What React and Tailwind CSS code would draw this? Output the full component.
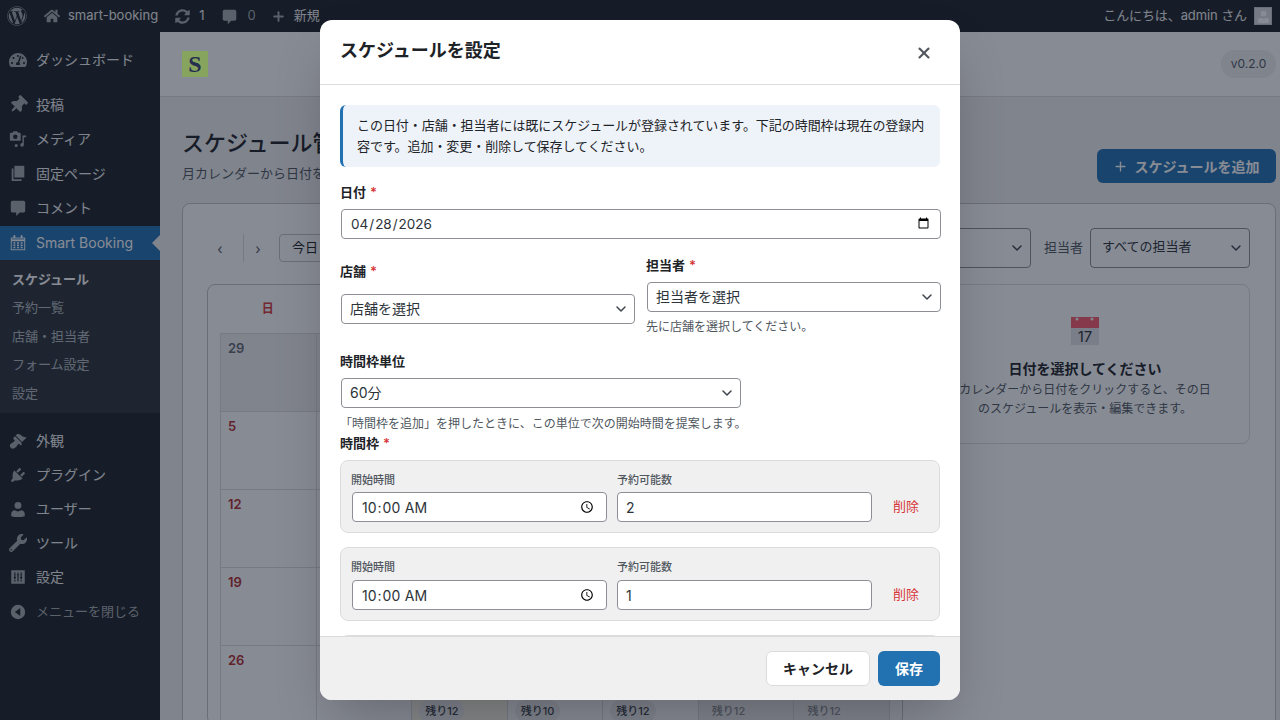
import React from "react";
import { FaWordpress, FaHome, FaSyncAlt, FaTachometerAlt, FaThumbtack, FaWrench } from "react-icons/fa";
import { ChevronDown, Plus, X } from "lucide-react";

const Bubble = ({ className }) => (
  <svg viewBox="0 0 20 20" className={className} fill="currentColor"><path d="M4 2h12c1.100 0 2 .9 2 2v9c0 1.100-.9 2-2 2h-4l-4 4v-4H4c-1.100 0-2-.9-2-2V4c0-1.100.9-2 2-2z" /></svg>
);
const MediaIcon = ({ className }) => (
  <svg viewBox="0 0 20 20" className={className} fill="currentColor"><path d="M2 3h2l1-1.500h4L10 3h2c.6 0 1 .4 1 1v7c0 .6-.4 1-1 1H2c-.6 0-1-.4-1-1V4c0-.6.4-1 1-1zm5 2a2.500 2.500 0 100 5 2.500 2.500 0 000-5z" /><path d="M15 6h4v2h-2.500v8.500a2 2 0 11-1.500-1.900V6zM8 15.500a1.700 1.700 0 100 3.400 1.700 1.700 0 000-3.400z" /></svg>
);
const PagesIcon = ({ className }) => (
  <svg viewBox="0 0 20 20" className={className} fill="currentColor"><path d="M6 2h11v13H6z" /><path d="M3 5h2v12h9v2H3z" /></svg>
);
const CalendarIcon = ({ className }) => (
  <svg viewBox="0 0 20 20" className={className} fill="none" stroke="currentColor" strokeWidth="1"><rect x="2.500" y="4.500" width="15" height="13" /><path d="M2.500 7h15" strokeWidth="2" /><path d="M6 1.500v3M14 1.500v3" strokeWidth="2" /><path d="M5 10h2M9 10h2M13 10h2M5 12.500h2M9 12.500h2M13 12.500h2M5 15h2M9 15h2M13 15h2" strokeWidth="1.500" /></svg>
);
const UserIcon = ({ className }) => (
  <svg viewBox="0 0 20 20" className={className} fill="currentColor"><circle cx="10" cy="6" r="3.800" /><path d="M2.500 18v-2.500c0-2.500 2-4 4-4 1 .8 2.200 1.300 3.500 1.300s2.500-.5 3.500-1.300c2 0 4 1.500 4 4V18c-2 .6-4.500 1-7.500 1s-5.500-.4-7.500-1z" /></svg>
);
const SettingsIcon = ({ className }) => (
  <svg viewBox="0 0 20 20" className={className}><path fill="currentColor" d="M2.500 2.500h15v15h-15z" /><path stroke="#1d2327" strokeWidth="1.300" fill="none" d="M6.500 5v5M10 8v7M13.500 5v5M6.500 13v2M10 5v.8M13.500 13v2" /><path fill="#1d2327" d="M5 10h3l-1.500 3zM8.500 8h3L10 5.500zM12 10h3l-1.500 3z" /></svg>
);
const CollapseIcon = ({ className }) => (
  <svg viewBox="0 0 20 20" className={className}><circle cx="10" cy="10" r="8" fill="currentColor" /><path d="M12.500 5.500v9L6.500 10z" fill="#1d2327" /></svg>
);
const BrushIcon = ({ className }) => (
  <svg viewBox="0 0 20 20" className={className} fill="currentColor"><path d="M14.480 11.060L7.410 3.990l1.500-1.500c.5-.56 2.300-.47 3.510.32 1.210.8 1.430 1.280 2.910 2.100 1.180.64 2.450 1.260 4.450.85z" /><path d="M13.770 11.770L6.700 4.700 4.930 6.470c-.39.39-.39 1.020 0 1.410l1.060 1.060c.39.39.39 1.030 0 1.420-.6.6-1.430 1.110-2.210 1.690-.35.26-.7.53-1.010.84C1.430 13.060 1 14.200 1 15.500c0 .83.33 1.500 1 2 .5.670 1.170 1 2 1 1.500 0 2.640-.43 3.650-1.770.31-.31.58-.66.84-1.010.58-.78 1.090-1.610 1.690-2.210.39-.39 1.030-.39 1.420 0l1.060 1.060c.39.39 1.020.39 1.410 0z" /></svg>
);
const PlugIcon = ({ className }) => (
  <svg viewBox="0 0 20 20" className={className} fill="currentColor"><path d="M13.110 4.360L9.870 7.600 8 5.730l3.240-3.240c.35-.34 1.050-.2 1.560.32.52.51.66 1.210.31 1.550zm-8 1.770l.91-1.120 9.010 9.010-1.190.84c-.71.71-2.630 1.160-3.820 1.160H6.140L4.900 17.260c-.59.59-1.540.59-2.120 0-.59-.58-.59-1.530 0-2.120l1.240-1.240v-3.880c0-1.130.46-3.050 1.090-3.890zm7.260 3.970l3.240-3.240c.34-.35 1.040-.21 1.550.31.52.51.66 1.210.31 1.550l-3.240 3.250z" /></svg>
);

const iconCls = "w-[18px] h-[18px]";
const menuA = [
  [<FaThumbtack className={`${iconCls} rotate-45`} />, "投稿"],
  [<MediaIcon className={iconCls} />, "メディア"],
  [<PagesIcon className={iconCls} />, "固定ページ"],
  [<Bubble className={iconCls} />, "コメント"],
];
const menuB = [
  [<BrushIcon className={iconCls} />, "外観"],
  [<PlugIcon className={iconCls} />, "プラグイン"],
  [<UserIcon className={iconCls} />, "ユーザー"],
  [<FaWrench className={iconCls} />, "ツール"],
  [<SettingsIcon className={iconCls} />, "設定"],
];

const MenuItem = ({ icon, label, h = "h-[34.300px]" }) => (
  <div className={`${h} flex items-center text-[14px] text-[#f0f0f1]`}>
    <span className="w-[36px] pl-[9px] flex text-[#a7aaad]">{icon}</span>
    <span>{label}</span>
  </div>
);

const Select = ({ value, className = "", small }) => (
  <div className={`relative ${className}`}>
    <select defaultValue={value} className={`w-full appearance-none bg-white border border-[#8c8f94] rounded-[4px] pr-6 pb-[2px] text-[#2c3338] outline-none ${small ? "h-[40px] pl-[11px] text-[13px]" : "h-[30px] pl-[8px] text-[14px]"}`}>
      <option>{value}</option>
    </select>
    <ChevronDown strokeWidth={2.2} className="w-[16px] h-[16px] absolute right-[6px] top-1/2 -translate-y-1/2 text-[#3c434a] pointer-events-none" />
  </div>
);

const Required = () => <span className="text-[#d63638] ml-[4px]">*</span>;
const Label = ({ children, req, className = "" }) => (
  <div className={`text-[13px] font-semibold text-[#1d2327] leading-[17px] ${className}`}>{children}{req && <Required />}</div>
);
const Help = ({ children, className = "" }) => <div className={`text-[12px] text-[#50575e] leading-[16px] ${className}`}>{children}</div>;

const inputBase = "bg-white border border-[#8c8f94] rounded-[4px] h-[30px] text-[#2c3338] outline-none";

const Slot = ({ count, className, gap }) => (
  <div className={`bg-[#f0f0f1] border border-[#dcdcde] rounded-[8px] pl-[11px] pr-[11px] pt-[12px] pb-[10px] flex items-end gap-[10px] ${className}`}>
    <div>
      <div className={`text-[11px] text-[#50575e] font-medium leading-[15px] -ml-px ${gap}`}>開始時間</div>
      <input type="time" defaultValue="10:00" className={`${inputBase} w-[255px] px-[8px] text-[14px]`} />
    </div>
    <div>
      <div className={`text-[11px] text-[#50575e] font-medium leading-[15px] ${gap}`}>予約可能数</div>
      <input type="number" defaultValue={count} className={`${inputBase} w-[255px] px-[8px] text-[14px]`} />
    </div>
    <div className="ml-[11px] text-[13px] text-[#d63638] h-[30px] leading-[28px]">削除</div>
  </div>
);

const rows = [
  [29, 30, 31, 1, 2, 3, 4],
  [5, 6, 7, 8, 9, 10, 11],
  [12, 13, 14, 15, 16, 17, 18],
  [19, 20, 21, 22, 23, 24, 25],
  [26, 27, 28, 29, 30, 1, 2],
];
const chips = { 2: "残り12", 3: "残り10", 4: "残り12", 5: "残り12", 6: "残り12" };

const Calendar = () => (
  <div className="w-[696px] shrink-0 border border-[#c3c4c7] rounded-[8px] px-[12px] bg-white">
    <div className="grid grid-cols-7 h-[48px] items-center text-center text-[12px] font-semibold text-[#50575e]">
      {["日", "月", "火", "水", "木", "金", "土"].map((d, i) => (
        <div key={d} className={i === 0 ? "text-[#d63638]" : ""}>{d}</div>
      ))}
    </div>
    <div className="grid grid-cols-7 border-t border-l border-[#dcdcde]">
      {rows.flatMap((r, ri) =>
        r.map((d, ci) => {
          const other = (ri === 0 && ci < 3) || (ri === 4 && ci >= 5);
          const today = ri === 4 && ci === 2;
          const chip = ri === 4 && chips[ci];
          return (
            <div key={`${ri}-${ci}`} className={`h-[78px] border-r border-b border-[#dcdcde] pl-[7px] pt-[4px] ${other ? "bg-[#f0f0f1]" : today ? "bg-[#fcf9e8]" : "bg-white"}`}>
              <div className={`text-[13px] font-semibold leading-[20px] ${ci === 0 ? (other ? "text-[#646970]" : "text-[#b32d2e]") : "text-[#50575e]"}`}>{d}</div>
              {chip && (
                <div className={`mt-[30px] w-fit text-[11px] font-medium leading-[22px] rounded-full px-[6px] ${other ? "text-[#8c8f94]" : "bg-[#f0f0f1] text-[#3c434a]"}`}>{chip}</div>
              )}
            </div>
          );
        })
      )}
    </div>
  </div>
);

export default function App() {
  return (
    <div className="h-[720px] w-[1280px] overflow-hidden relative flex flex-col bg-[#f0f0f1] text-[#1d2327] font-['Inter','Noto_Sans_CJK_JP',sans-serif]">
      {/* admin bar */}
      <div className="h-[32px] shrink-0 bg-[#1d2327] flex items-center text-[13px] text-[#f0f0f1]">
        <FaWordpress className="w-[20px] h-[20px] ml-[7px] text-[#a7aaad]" />
        <FaHome className="w-[16px] h-[16px] ml-[17px] text-[#a7aaad]" />
        <span className="ml-[8px]">smart-booking</span>
        <FaSyncAlt className="w-[15px] h-[15px] ml-[17px] text-[#a7aaad]" />
        <span className="ml-[9px]">1</span>
        <Bubble className="w-[17px] h-[17px] ml-[17px] text-[#a7aaad]" />
        <span className="ml-[9px] text-[#a7aaad]">0</span>
        <Plus strokeWidth={3} className="w-[15px] h-[15px] ml-[15px] text-[#a7aaad]" />
        <span className="ml-[8px]">新規</span>
        <span className="ml-auto tracking-[-0.1px]">こんにちは、admin さん</span>
        <span className="ml-[7px] mr-[8px] w-[18px] h-[18px] bg-[#dcdcde] border border-[#c3c4c7] overflow-hidden flex items-end justify-center">
          <UserIcon className="w-[15px] h-[15px] text-white" />
        </span>
      </div>

      <div className="flex flex-1 min-h-0">
        {/* sidebar */}
        <aside className="w-[160px] shrink-0 bg-[#1d2327]">
          <div className="pt-[10.500px]">
            <MenuItem icon={<FaTachometerAlt className={iconCls} />} label="ダッシュボード" />
          </div>
          <div className="mt-[10.700px]">
            {menuA.map(([icon, label]) => <MenuItem key={label} icon={icon} label={label} />)}
          </div>
          <div className="h-[34px] mt-[1.300px] bg-[#2271b1] flex items-center text-[14px] text-white relative">
            <span className="w-[36px] pl-[9px] flex"><CalendarIcon className={iconCls} /></span>
            <span>Smart Booking</span>
            <span className="absolute right-0 top-[9px] border-y-[8px] border-y-transparent border-r-[8px] border-r-[#f0f0f1]" />
          </div>
          <div className="h-[153px] bg-[#2c3338] pt-[5px] pl-[12px] text-[13px] text-[#f0f6fcb3]">
            <div className="h-[29px] flex items-center font-bold text-white">スケジュール</div>
            {["予約一覧", "店舗・担当者", "フォーム設定", "設定"].map((t) => (
              <div key={t} className="h-[28.500px] flex items-center">{t}</div>
            ))}
          </div>
          <div className="mt-[11px]">
            {menuB.map(([icon, label]) => <MenuItem key={label} icon={icon} label={label} h="h-[34px]" />)}
          </div>
          <div className="h-[34px] mt-px flex items-center text-[13px] text-[#a7aaad]">
            <span className="w-[36px] pl-[9px] flex"><CollapseIcon className={iconCls} /></span>
            <span>メニューを閉じる</span>
          </div>
        </aside>

        {/* main */}
        <main className="flex-1 min-w-0 overflow-hidden">
          <header className="h-[65px] bg-white border-b border-[#dcdcde] flex items-center pl-[22px] pr-[4px] justify-between">
            <div className="relative z-[1] w-[26px] h-[26px] bg-[#86a45e] flex items-center justify-center font-['Liberation_Serif',serif] font-bold text-[24px] text-[#262e50] leading-none">S</div>
            <div className="h-[28px] w-[55px] rounded-full bg-[#f0f0f1] text-[12px] text-[#50575e] flex items-center justify-center">v0.2.0</div>
          </header>
          <div className="pl-[22px] pr-[4px]">
            <div className="flex items-start justify-between pt-[30px] h-[106px]">
              <div>
                <h1 className="text-[22px] font-medium leading-[32px] text-[#1d2327]">スケジュール管理</h1>
                <p className="text-[13px] leading-[20px] text-[#50575e] mt-[4px]">月カレンダーから日付を選択してスケジュールを管理します。</p>
              </div>
              <div className="mt-[22px] h-[34px] w-[179px] rounded-[6px] bg-[#2271b1] text-white text-[14px] font-semibold flex items-center justify-center gap-[6px]">
                <Plus strokeWidth={2.2} className="w-[15px] h-[15px]" />スケジュールを追加
              </div>
            </div>
            <div className="border border-[#c3c4c7] rounded-[8px] bg-white pl-[24px] pr-[25px] h-[600px]">
              <div className="h-[80px] flex items-center pt-[8px]">
                <span className="w-[26px] text-[14px] text-[#50575e] text-center">‹</span>
                <span className="w-px h-[28px] bg-[#dcdcde] ml-[10px]" />
                <span className="w-[26px] ml-px text-[14px] text-[#50575e] text-center">›</span>
                <span className="ml-[8px] h-[28px] w-[52px] border border-[#c3c4c7] rounded-[4px] flex items-center justify-center text-[13px]">今日</span>
                <span className="ml-auto text-[13px] text-[#50575e] mr-[7px]">店舗</span>
                <Select small value="すべての店舗" className="w-[160px]" />
                <span className="ml-[13px] text-[13px] text-[#50575e] mr-[7px]">担当者</span>
                <Select small value="すべての担当者" className="w-[160px]" />
              </div>
              <div className="flex gap-[17px] items-start">
                <Calendar />
                <div className="w-[330px] h-[160px] border border-[#dcdcde] rounded-[8px] flex flex-col items-center pt-[32px] text-center">
                  <svg viewBox="0 0 28 28" className="w-[28px] h-[28px]">
                    <rect width="28" height="28" fill="#e4e4e8" />
                    <rect width="28" height="11" fill="#ff5a6e" />
                    <circle cx="6" cy="2" r="1.500" fill="#f0f0f1" />
                    <circle cx="21" cy="2" r="1.500" fill="#f0f0f1" />
                    <text x="14" y="25" textAnchor="middle" fontSize="15" fill="#2c3338" fontFamily="Inter, sans-serif">17</text>
                  </svg>
                  <div className="text-[14px] font-semibold text-[#1d2327] mt-[14px] leading-[19px]">日付を選択してください</div>
                  <div className="text-[12px] text-[#50575e] leading-[19px] mt-[2px]">カレンダーから日付をクリックすると、その日<br />のスケジュールを表示・編集できます。</div>
                </div>
              </div>
            </div>
          </div>
        </main>
      </div>

      {/* overlay */}
      <div className="absolute inset-0 bg-[rgba(15,23,42,0.5)] flex items-center justify-center">
        <div className="w-[640px] h-[680px] bg-white rounded-[12px] overflow-hidden flex flex-col shadow-2xl">
          <div className="h-[65px] shrink-0 border-b border-[#dcdcde] flex items-center justify-between pl-[20px] pr-[27px]">
            <h2 className="text-[18px] font-bold text-[#1d2327] -mt-[2.500px]">スケジュールを設定</h2>
            <X strokeWidth={2.8} className="w-[18px] h-[18px] text-[#50575e] mt-[2px]" />
          </div>
          <div className="flex-1 min-h-0 overflow-hidden px-[20px] pt-[20px]">
            <div className="h-[62px] bg-[#eef3fa] border-l-[3px] border-[#2271b1] rounded-[6px] pl-[14px] pr-[12px] py-[10px] text-[13px] tracking-[-0.05px] leading-[21px] text-[#1d2327]">
              この日付・店舗・担当者には既にスケジュールが登録されています。下記の時間枠は現在の登録内容です。追加・変更・削除して保存してください。
            </div>
            <Label req className="mt-[17px]">日付</Label>
            <input type="date" defaultValue="2026-04-28" className={`${inputBase} w-[600px] ml-px mt-[8px] block px-[8px] text-[13.500px]`} />
            <div className="flex gap-[12px] items-start mt-[18px] ml-px">
              <div className="w-[294px] shrink-0 pt-[6px]">
                <Label req className="-ml-px">店舗</Label>
                <Select value="店舗を選択" className="mt-[14px]" />
              </div>
              <div className="w-[294px] shrink-0">
                <Label req className="-ml-px">担当者</Label>
                <Select value="担当者を選択" className="mt-[8px]" />
                <Help className="mt-[7px] -ml-px">先に店舗を選択してください。</Help>
              </div>
            </div>
            <Label className="mt-[18px]">時間枠単位</Label>
            <Select value="60分" className="w-[400px] ml-px mt-[8px]" />
            <Help className="mt-[6px] pt-[2px]">「時間枠を追加」を押したときに、この単位で次の開始時間を提案します。</Help>
            <Label req className="mt-[3px]">時間枠</Label>
            <Slot count={2} gap="mb-[4px]" className="mt-[8px]" />
            <Slot count={1} gap="mb-[5px]" className="mt-[14px]" />
            <div className="h-[74px] mt-[14px] bg-[#f0f0f1] border border-[#dcdcde] rounded-[8px]" />
          </div>
          <div className="h-[64px] shrink-0 bg-[#f0f0f1] border-t border-[#dcdcde] flex items-center justify-end gap-[8px] pr-[20px]">
            <div className="w-[104px] h-[35px] bg-white border border-[#dcdcde] rounded-[6px] flex items-center justify-center text-[14px] font-semibold text-[#1d2327]">キャンセル</div>
            <div className="w-[62px] h-[35px] bg-[#2271b1] rounded-[6px] flex items-center justify-center text-[14px] font-semibold text-white">保存</div>
          </div>
        </div>
      </div>
    </div>
  );
}
